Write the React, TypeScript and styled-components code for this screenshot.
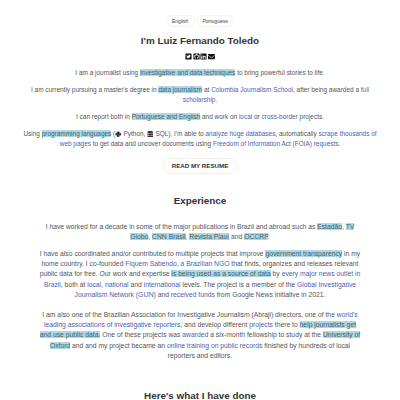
import React from "react";
import styled, { createGlobalStyle } from "styled-components";
import { FaTwitterSquare, FaGithubSquare, FaLinkedin, FaEnvelope, FaPython, FaDatabase } from "react-icons/fa";

const GlobalStyle = createGlobalStyle`
  * { box-sizing: border-box; }
  body {
    margin: 0;
    background: #fff;
    color: #555;
    font-family: "Liberation Sans", Arial, sans-serif;
    overflow: hidden;
  }
`;

const Page = styled.main`
  display: flex;
  flex-direction: column;
  align-items: center;
  height: 400px;
  overflow: hidden;
  padding-top: 15px;
  text-align: center;
`;

const LanguageBar = styled.nav`
  display: flex;
  gap: 1px;
`;

const LanguageButton = styled.a`
  height: 12px;
  padding: 0 5.5px;
  border: 1px solid #f3f3f3;
  border-radius: 6px;
  font-size: 5px;
  line-height: 10px;
  color: #444;
`;

const Title = styled.h1<{ $top: number }>`
  margin: ${(p) => p.$top}px 0 0;
  font-size: 9.87px;
  line-height: 11px;
  font-weight: 700;
  color: #333;
  white-space: nowrap;
`;

const SocialLinks = styled.div`
  display: flex;
  gap: 0.5px;
  height: 7px;
  margin-top: 7px;
  color: #111;
  font-size: 7px;
`;

const Paragraph = styled.p<{ $top: number; $intro?: boolean }>`
  margin: ${(p) => p.$top}px 0 0;
  font-size: ${(p) => (p.$intro ? 6.46 : 6.78)}px;
  line-height: 10.2px;
  white-space: nowrap;

  svg {
    color: #333;
    vertical-align: -0.8px;
  }
`;

const Mark = styled.mark`
  background: #add8e6;
  color: #456067;
`;

const Link = styled.a`
  color: #4b5fae;
`;

const ResumeButton = styled.a`
  height: 16px;
  margin-top: 8.4px;
  padding: 0 7.3px;
  border: 1px solid #eee;
  border-radius: 8px;
  font-size: 6.2px;
  line-height: 14px;
  font-weight: 700;
  color: #333;
`;

export default function App() {
  return (
    <>
      <GlobalStyle />
      <Page>
        <LanguageBar>
          <LanguageButton>English</LanguageButton>
          <LanguageButton>Portuguese</LanguageButton>
        </LanguageBar>
        <Title $top={8}>I'm Luiz Fernando Toledo</Title>
        <SocialLinks>
          <FaTwitterSquare />
          <FaGithubSquare />
          <FaLinkedin />
          <FaEnvelope />
        </SocialLinks>
        <Paragraph $top={8} $intro>
          I am a journalist using <Mark>investigative and data techniques</Mark> to bring powerful stories to life.
        </Paragraph>
        <Paragraph $top={6.8} $intro>
          I am currently pursuing a master's degree in <Mark>data journalism</Mark> at{" "}
          <Link>Columbia Journalism School</Link>, after being awarded a <Link>full<br />scholarship</Link>.
        </Paragraph>
        <Paragraph $top={6.8} $intro>
          I can report both in <Mark>Portuguese and English</Mark> and work on <Link>local</Link> or{" "}
          <Link>cross-border</Link> projects.
        </Paragraph>
        <Paragraph $top={6.8} $intro>
          Using <Mark>programming languages</Mark> (<FaPython /> Python, <FaDatabase /> SQL), I'm able to{" "}
          <Link>analyze huge databases</Link>, automatically <Link>scrape thousands of<br />web pages</Link> to get
          data and uncover documents using <Link>Freedom of Information Act (FOIA) requests</Link>.
        </Paragraph>
        <ResumeButton>READ MY RESUME</ResumeButton>
        <Title $top={21.4}>Experience</Title>
        <Paragraph $top={15.4}>
          I have worked for a decade in some of the major publications in Brazil and abroad such as{" "}
          <Mark>Estadão</Mark>, <Mark>TV<br />Globo</Mark>, <Mark>CNN Brasil</Mark>, <Mark>Revista Piauí</Mark> and{" "}
          <Mark>OCCRP</Mark>.
        </Paragraph>
        <Paragraph $top={6.8}>
          I have also coordinated and/or contributed to multiple projects that improve{" "}
          <Mark>government transparency</Mark> in my<br />
          home country. I co-founded <Link>Fiquem Sabendo, a Brazilian NGO</Link> that finds, organizes and releases
          relevant<br />
          public data for free. Our work and expertise <Mark>is being used as a source of data</Mark> by{" "}
          <Link>every major news outlet in<br />Brazil</Link>, both at <Link>local</Link>, <Link>national</Link> and{" "}
          <Link>international</Link> levels. The project is a member of the{" "}
          <Link>Global Investigative<br />Journalism Network (GIJN)</Link> and <Link>received funds</Link> from Google
          News Initiative in 2021.
        </Paragraph>
        <Paragraph $top={10}>
          I am also one of the Brazilian Association for Investigative Journalism (Abraji) directors, one of the{" "}
          <Link>world's<br />leading associations of investigative reporters</Link>, and develop different{" "}
          <Link>projects</Link> there to <Mark>help journalists get<br />and use public data.</Mark> One of these
          projects was <Link>awarded</Link> a six-month fellowship to study at the{" "}
          <Mark>University of<br />Oxford</Mark> and and my project became an{" "}
          <Link>online training on public records</Link> finished by hundreds of local<br />
          reporters and editors.
        </Paragraph>
        <Title $top={28.8}>Here's what I have done</Title>
      </Page>
    </>
  );
}
